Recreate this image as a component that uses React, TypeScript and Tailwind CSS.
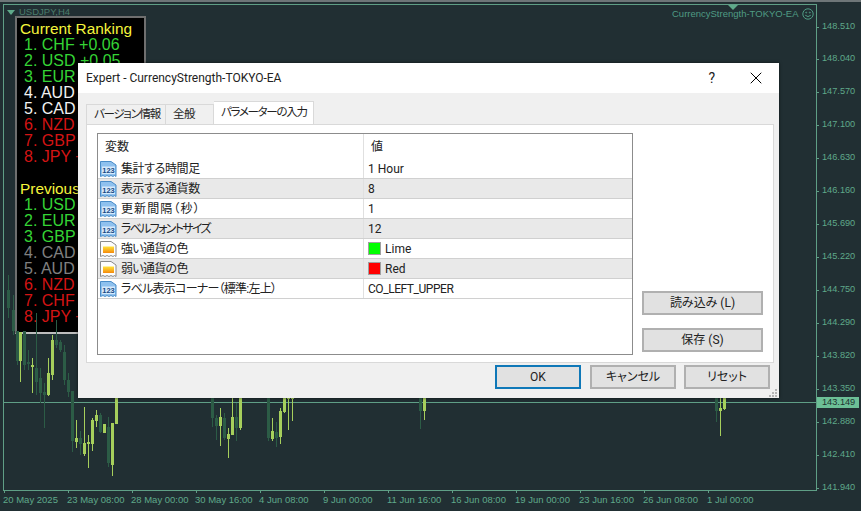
import { X } from "lucide-react";

// x, wick top, wick bottom, body top, body bottom, light candle?
type Candle = [number, number, number, number, number, boolean];

const candles: Candle[] = [
  [8, 275, 318, 290, 308, false],
  [13, 295, 335, 310, 331, false],
  [17, 331, 365, 331, 361, false],
  [20, 332, 382, 332, 361, true],
  [24, 331, 370, 331, 365, false],
  [28, 350, 370, 362, 364, false],
  [32, 358, 393, 365, 367, true],
  [36, 313, 395, 368, 382, false],
  [40, 368, 403, 378, 393, false],
  [44, 383, 428, 392, 395, false],
  [48, 358, 396, 373, 395, true],
  [52, 335, 380, 340, 375, true],
  [56, 320, 348, 340, 345, false],
  [60, 340, 352, 342, 350, false],
  [64, 345, 385, 352, 380, false],
  [68, 373, 397, 380, 392, false],
  [72, 391, 452, 391, 441, false],
  [76, 420, 448, 438, 442, true],
  [80, 431, 455, 438, 444, false],
  [84, 407, 456, 443, 454, true],
  [88, 435, 468, 442, 444, true],
  [92, 418, 451, 420, 444, true],
  [96, 410, 427, 415, 421, true],
  [100, 413, 433, 415, 432, false],
  [104, 424, 433, 424, 433, true],
  [108, 417, 467, 427, 463, false],
  [112, 423, 476, 423, 465, true],
  [116, 398, 424, 398, 424, true],
  [212, 398, 427, 398, 418, false],
  [216, 415, 440, 418, 426, false],
  [220, 408, 446, 417, 426, true],
  [224, 413, 440, 418, 438, false],
  [228, 428, 458, 434, 439, true],
  [232, 398, 435, 417, 435, true],
  [236, 403, 441, 417, 428, false],
  [240, 398, 430, 398, 428, true],
  [268, 398, 441, 398, 438, false],
  [272, 418, 441, 431, 439, true],
  [276, 422, 447, 432, 438, false],
  [280, 408, 444, 411, 437, true],
  [284, 398, 413, 398, 412, true],
  [288, 398, 430, 398, 399, true],
  [292, 398, 421, 398, 399, true],
  [420, 398, 429, 398, 411, false],
  [424, 398, 420, 398, 411, true],
  [716, 398, 422, 398, 411, false],
  [720, 398, 436, 408, 411, true],
  [724, 398, 410, 398, 409, true],
];

const prices: [string, number][] = [
  ["148.510", 27],
  ["148.040", 59],
  ["147.570", 92],
  ["147.100", 125],
  ["146.630", 158],
  ["146.160", 191],
  ["145.690", 224],
  ["145.220", 257],
  ["144.750", 290],
  ["144.290", 323],
  ["143.820", 356],
  ["143.350", 389],
  ["142.880", 422],
  ["142.410", 455],
  ["141.940", 488],
];

const dates = [
  "20 May 2025",
  "23 May 08:00",
  "28 May 00:00",
  "30 May 16:00",
  "4 Jun 08:00",
  "9 Jun 00:00",
  "11 Jun 16:00",
  "16 Jun 08:00",
  "19 Jun 00:00",
  "23 Jun 16:00",
  "26 Jun 08:00",
  "1 Jul 00:00",
];

const GREEN = "text-[#35d435]";
const WHITE = "text-[#f2f2f2]";
const GRAY = "text-[#808080]";
const RED = "text-[#d41414]";

const currentRanking: [string, string][] = [
  ["1. CHF +0.06", GREEN],
  ["2. USD +0.05", GREEN],
  ["3. EUR", GREEN],
  ["4. AUD", WHITE],
  ["5. CAD", WHITE],
  ["6. NZD", RED],
  ["7. GBP", RED],
  ["8. JPY +", RED],
];

const previousRanking: [string, string][] = [
  ["1. USD", GREEN],
  ["2. EUR", GREEN],
  ["3. GBP", GREEN],
  ["4. CAD", GRAY],
  ["5. AUD", GRAY],
  ["6. NZD", RED],
  ["7. CHF", RED],
  ["8. JPY +", RED],
];

type Param = {
  label: string;
  track: string;
  value: string;
  icon: "num" | "color";
  swatch?: string;
  valueTrack?: string;
};

const params: Param[] = [
  { label: "集計する時間足", track: "tracking-[-0.4px]", value: "1 Hour", icon: "num" },
  { label: "表示する通貨数", track: "tracking-[-0.4px]", value: "8", icon: "num" },
  { label: "更新間隔（秒）", track: "tracking-[1.1px]", value: "1", icon: "num" },
  { label: "ラベルフォントサイズ", track: "tracking-[-1.7px]", value: "12", icon: "num" },
  { label: "強い通貨の色", track: "tracking-[-0.7px]", value: "Lime", icon: "color", swatch: "bg-[#00ff00]" },
  { label: "弱い通貨の色", track: "tracking-[-0.7px]", value: "Red", icon: "color", swatch: "bg-[#ff0000]" },
  {
    label: "ラベル表示コーナー（標準:左上）",
    track: "tracking-[-0.75px]",
    value: "CO_LEFT_UPPER",
    icon: "num",
    valueTrack: "tracking-[-0.45px]",
  },
];

const PAGE_PATH =
  "M0.5 1.5 H11 L16 5 V16.5 L14.5 15.5 L13 16.5 L11 15.5 L9 16.5 L7 15.5 L5 16.5 L3 15.5 L0.5 16.5 Z";

function NumIcon() {
  return (
    <svg width="17" height="17" viewBox="0 0 17 17" className="shrink-0">
      <path d={PAGE_PATH} fill="#8fc1ee" stroke="#4a8cc8" />
      <rect x="2" y="6.5" width="13" height="7.5" fill="#d5e9fb" />
      <text
        x="8.5"
        y="13.2"
        textAnchor="middle"
        fontSize="7.5"
        fontWeight="700"
        fill="#174a86"
        fontFamily="Liberation Sans, sans-serif"
      >
        123
      </text>
    </svg>
  );
}

function ColorIcon() {
  return (
    <svg width="17" height="17" viewBox="0 0 17 17" className="shrink-0">
      <defs>
        <linearGradient id="colorFill" x1="0" y1="0" x2="0" y2="1">
          <stop offset="0" stopColor="#ffe23a" />
          <stop offset="1" stopColor="#f58a0c" />
        </linearGradient>
      </defs>
      <path d={PAGE_PATH} fill="#fdfdfd" stroke="#8a8a8a" />
      <rect x="3" y="6.5" width="11" height="6.5" fill="url(#colorFill)" />
    </svg>
  );
}

function Smile() {
  return (
    <svg width="12" height="12" viewBox="0 0 12 12" fill="none" stroke="#4f9c84">
      <circle cx="6" cy="6" r="5.2" />
      <circle cx="4.2" cy="4.6" r="0.5" />
      <circle cx="7.8" cy="4.6" r="0.5" />
      <path d="M3.2 7.2 Q6 10 8.8 7.2" />
    </svg>
  );
}

function Button({ children, className }: { children: string; className: string }) {
  return (
    <div
      className={
        "flex items-center justify-center h-[24px] bg-[#e1e1e1] border-2 border-[#b0b0b0] text-[12px] text-[#222] " +
        className
      }
    >
      {children}
    </div>
  );
}

function Ranking({ title, items }: { title: string; items: [string, string][] }) {
  return (
    <div className="flex flex-col whitespace-nowrap">
      <div className="text-[#f5f53c] text-[15.4px]">{title}</div>
      {items.map(([text, color]) => (
        <div key={text} className={"pl-[4px] " + color}>
          {text}
        </div>
      ))}
    </div>
  );
}

function Dialog() {
  return (
    <div className="absolute left-[78px] top-[63px] w-[701px] h-[335px] bg-[#f0f0f0] shadow-[0_0_3px_rgba(0,0,0,0.6)] flex flex-col font-['Roboto','Noto_Sans_CJK_JP',sans-serif] [font-feature-settings:'palt'] text-[#222]">
      <div className="h-[30px] shrink-0 bg-white flex items-center pl-[8px] text-[12px] text-[#222]">
        <span>Expert - CurrencyStrength-TOKYO-EA</span>
        <span className="ml-auto mr-[31px] text-[14px]">?</span>
        <X size={20} strokeWidth={1.2} className="mr-[13px] text-black" />
      </div>

      <div className="flex items-end h-[31px] shrink-0 pl-[8px] text-[11.5px] tracking-[-1.3px] whitespace-nowrap">
        <div className="h-[20px] w-[80px] pl-[7px] flex items-center border border-b-0 border-[#d9d9d9]">
          バージョン情報
        </div>
        <div className="h-[20px] w-[48px] pl-[7px] flex items-center border border-b-0 border-l-0 border-[#d9d9d9] tracking-[-0.5px]">
          全般
        </div>
        <div className="h-[23px] w-[100px] pl-[7px] flex items-center bg-white border border-b-0 border-l-0 border-[#d9d9d9]">
          パラメーターの入力
        </div>
      </div>

      <div className="ml-[8px] w-[688px] h-[239px] shrink-0 bg-white border border-[#d9d9d9] flex pl-[10px] pt-[8px] text-[12px]">
        <div className="w-[536px] h-[222px] border border-[#8c8c8c] flex flex-col">
          <div className="flex h-[25px] shrink-0 items-center">
            <div className="w-[266px] pl-[7px] border-r border-[#e0e0e0] h-full flex items-center">変数</div>
            <div className="pl-[7px]">値</div>
          </div>
          {params.map((p, i) => (
            <div
              key={p.label}
              className={
                "flex h-[20px] shrink-0 items-center border-b border-[#d0d0d0] " +
                (i % 2 === 1 ? "bg-[#e9e9e9]" : "bg-white")
              }
            >
              <div className="w-[266px] h-full pl-[2px] flex items-center gap-[4px] border-r border-[#e0e0e0] whitespace-nowrap">
                {p.icon === "num" ? <NumIcon /> : <ColorIcon />}
                <span className={p.track}>{p.label}</span>
              </div>
              <div className="pl-[4px] flex items-center gap-[4px]">
                {p.swatch && <span className={"w-[13px] h-[13px] border border-[#a0a0a0] " + p.swatch} />}
                <span className={p.valueTrack}>{p.value}</span>
              </div>
            </div>
          ))}
        </div>
        <div className="ml-[9px] w-[121px] flex flex-col justify-end gap-[13px] pb-[10px]">
          <Button className="w-[121px]">読み込み (L)</Button>
          <Button className="w-[121px]">保存 (S)</Button>
        </div>
      </div>

      <div className="flex justify-end gap-[8px] pr-[9px] pt-[2px]">
        <div className="flex items-center justify-center w-[86px] h-[24px] mr-px bg-[#e1e1e1] border-2 border-[#0f78b8] text-[12px]">
          OK
        </div>
        <Button className="w-[86px]">キャンセル</Button>
        <Button className="w-[86px]">リセット</Button>
      </div>

      <svg width="8" height="8" viewBox="0 0 8 8" className="absolute right-[2px] bottom-[1px]" fill="#b5b5b5">
        <rect x="6" y="0" width="2" height="2" />
        <rect x="3" y="3" width="2" height="2" />
        <rect x="6" y="3" width="2" height="2" />
        <rect x="0" y="6" width="2" height="2" />
        <rect x="3" y="6" width="2" height="2" />
        <rect x="6" y="6" width="2" height="2" />
      </svg>
    </div>
  );
}

export default function App() {
  return (
    <div className="relative w-[861px] h-[511px] overflow-hidden bg-[#212f33] font-['Liberation_Sans',sans-serif]">
      <div className="h-[2px] bg-[#6e7678]" />

      {/* chart frame */}
      <div className="ml-[3px] mt-[2px] w-[814px] h-[487px] border border-[#5f9f86]" />

      {/* time axis */}
      <div className="flex pl-[3px] pt-[3px] text-[9.5px] leading-[12px] text-[#5fa98a] whitespace-nowrap">
        {dates.map((d) => (
          <div key={d} className="w-[64px]">
            {d}
          </div>
        ))}
      </div>

      {dates.map((d, i) => (
        <div key={d} className="absolute top-[490px] w-px h-[3px] bg-[#5f9f86]" style={{ left: 4 + i * 64 }} />
      ))}

      {/* price axis */}
      {prices.map(([p, y]) => (
        <div
          key={p}
          className="absolute left-[817px] flex items-center gap-[3px] h-[12px] text-[9.2px] text-[#5fa98a]"
          style={{ top: y - 6 }}
        >
          <span className="w-[2px] h-px bg-[#5f9f86]" />
          <span>{p}</span>
        </div>
      ))}

      <div className="absolute left-[3px] top-[402px] w-[814px] h-px bg-[#5f9f86]" />

      {/* ranking label on chart */}
      <div className="absolute left-[15px] top-[16px] w-[131px] h-[318px] bg-black border-2 border-[#6f6f6f] border-b-[#bdbdbd] pl-[3px] pt-[3px] text-[16px] leading-[16px] flex flex-col gap-[16px]">
        <Ranking title="Current Ranking" items={currentRanking} />
        <Ranking title="Previous" items={previousRanking} />
      </div>

      {/* candles */}
      <svg width="861" height="511" className="absolute left-0 top-0" shapeRendering="crispEdges">
        {candles.map(([x, hi, lo, top, bottom, light]) => (
          <g key={x} fill={light ? "#a6cf5c" : "#2c5c46"}>
            <rect x={x} y={hi} width="1" height={lo - hi} />
            <rect x={x - 1} y={top} width="3" height={bottom - top} />
          </g>
        ))}
      </svg>

      {/* chart captions */}
      <div className="absolute left-[7px] top-[10px] w-0 h-0 border-x-[4px] border-x-transparent border-t-[5px] border-t-[#5fa98a]" />
      <div className="absolute left-[19px] top-[6px] text-[9.5px] leading-[12px] text-[#4b7c6c]">USDJPY,H4</div>
      <div className="absolute left-[728px] top-[5px] w-0 h-0 border-x-[5px] border-x-transparent border-t-[5px] border-t-[#5fa98a]" />
      <div className="absolute left-[672px] top-[8px] flex items-center gap-[3px] text-[9.5px] leading-[12px] text-[#4f9c84] whitespace-nowrap">
        <span>CurrencyStrength-TOKYO-EA</span>
        <Smile />
      </div>

      <div className="absolute left-[817px] top-[397px] w-[42px] h-[11px] bg-[#6cbf96] text-[9.2px] leading-[11px] text-[#20332f] pl-[5px]">
        143.149
      </div>

      <Dialog />
    </div>
  );
}
